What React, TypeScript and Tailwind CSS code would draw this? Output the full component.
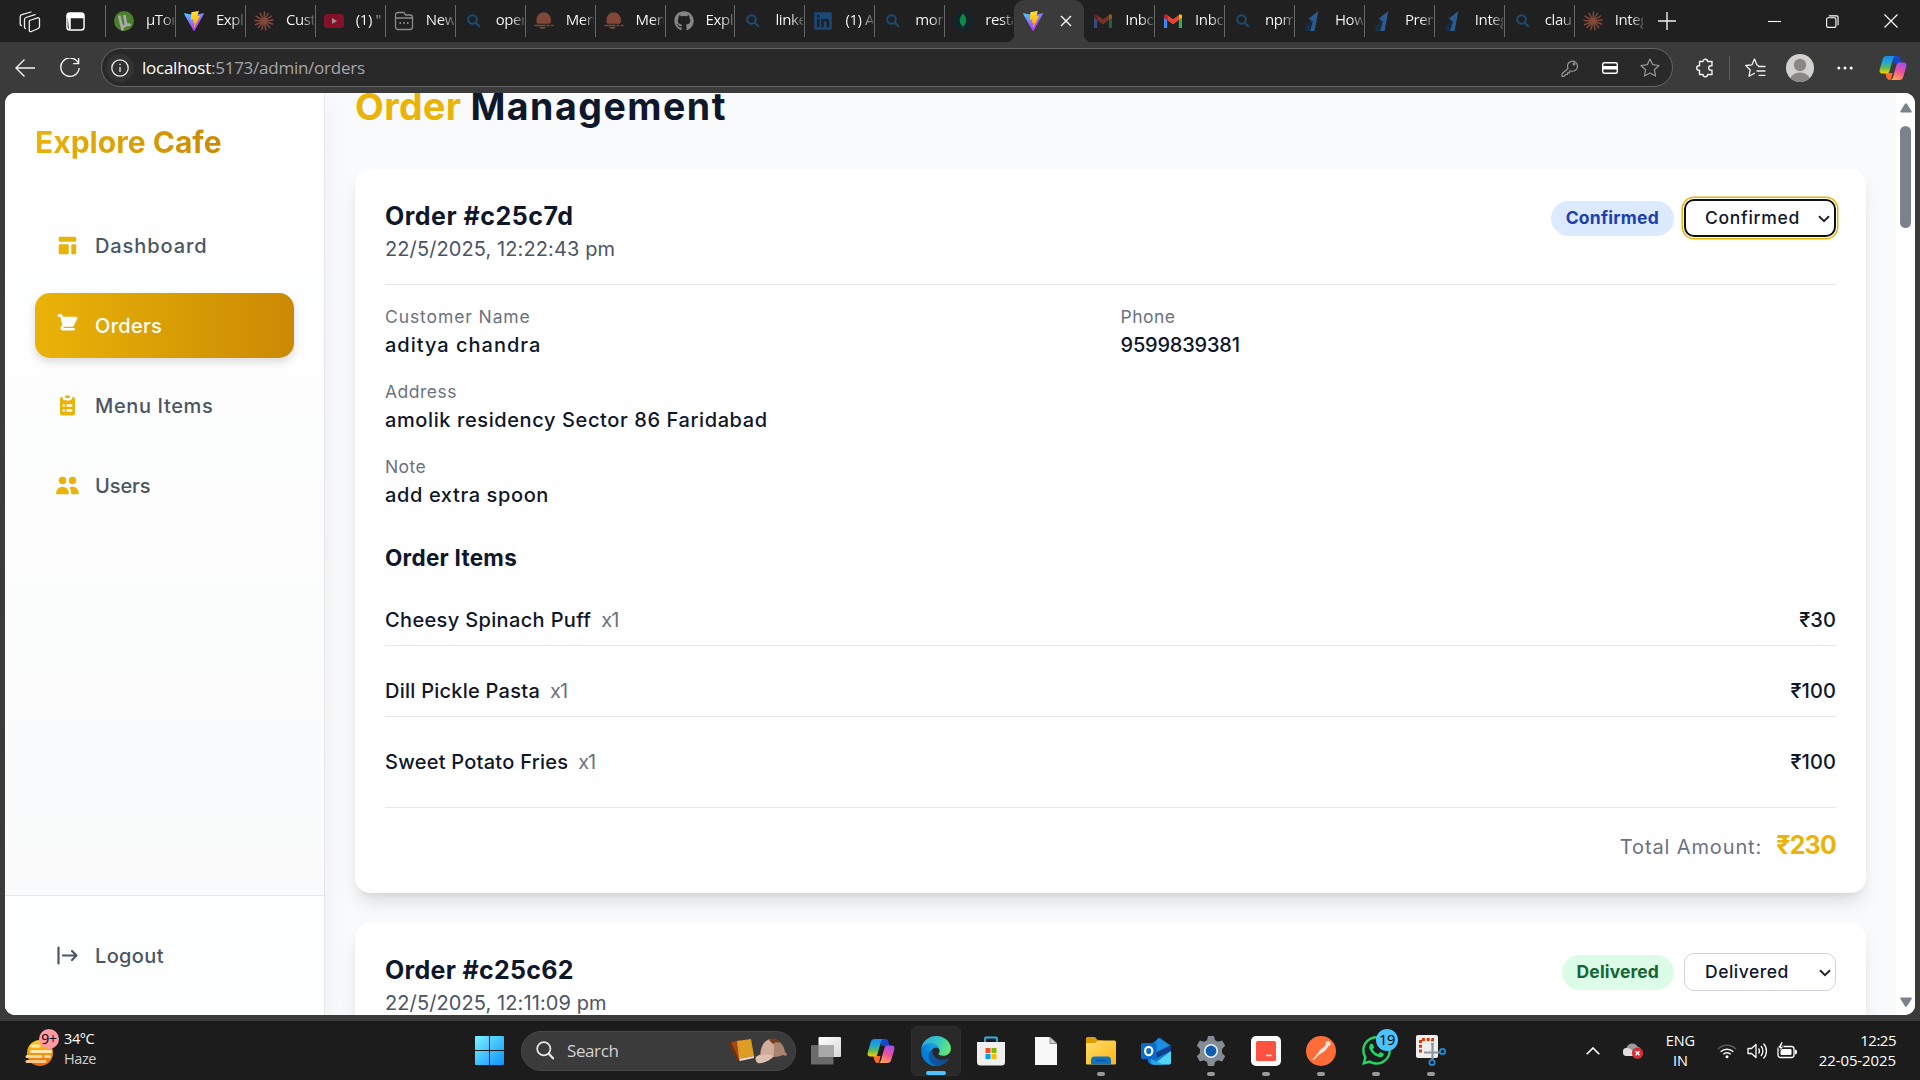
import type { ReactNode } from "react";
import { HiTemplate, HiClipboardList, HiUsers } from "react-icons/hi";
import { FaGithub, FaLinkedin, FaWhatsapp } from "react-icons/fa";

/* ---------- logos ---------- */

function Vite() {
  return (
    <svg viewBox="0 0 256 257" className="size-5">
      <defs>
        <linearGradient id="va" x1="0" x2="0.6" y1="0" y2="0.9"><stop stopColor="#41d1ff" /><stop offset="1" stopColor="#bd34fe" /></linearGradient>
        <linearGradient id="vb" x1="0.4" x2="0.5" y1="0" y2="0.9"><stop stopColor="#ffea83" /><stop offset=".1" stopColor="#ffdd35" /><stop offset="1" stopColor="#ffa800" /></linearGradient>
      </defs>
      <path fill="url(#va)" d="M255.153 37.938L134.897 252.976c-2.483 4.44-8.862 4.466-11.382.048L.875 37.958c-2.746-4.814 1.371-10.646 6.827-9.67l120.385 21.517a6.537 6.537 0 0 0 2.322-.004l117.867-21.483c5.438-.991 9.574 4.796 6.877 9.62Z" />
      <path fill="url(#vb)" d="M185.432.063L96.44 17.501a3.268 3.268 0 0 0-2.634 3.014l-5.474 92.456a3.268 3.268 0 0 0 3.997 3.378l24.777-5.718c2.318-.535 4.413 1.507 3.936 3.838l-7.361 36.047c-.495 2.426 1.782 4.5 4.151 3.78l15.304-4.649c2.372-.72 4.652 1.36 4.15 3.788l-11.698 56.621c-.732 3.542 3.979 5.473 5.943 2.437l1.313-2.028l72.516-144.72c1.215-2.423-.88-5.186-3.54-4.672l-25.505 4.922c-2.396.462-4.435-1.77-3.759-4.114l16.646-57.705c.677-2.35-1.37-4.583-3.769-4.113Z" />
    </svg>
  );
}

function Torrent() {
  return (
    <svg viewBox="0 0 20 20" className="size-5">
      <circle cx="10" cy="10" r="10" fill="#4a7f2b" />
      <path d="M5.2 4.500l2.200 9.400c.3 1.200 1 1.600 2 1.500 1.500-.1 2.800-1.200 2.500-2.900L10.300 4M12 12.500c.5 1.400 2.500 1.800 4.500.8M7.500 14l1.200 5.500" fill="none" stroke="#a9a9a9" strokeWidth="2.800" />
    </svg>
  );
}

function Claude() {
  return (
    <svg viewBox="0 0 20 20" className="size-5" stroke="#82493a" strokeWidth="1.500" strokeLinecap="round">
      <path d="M10 10L10.500 1M10 10L14.200 2.500M10 10L17.500 5M10 10L19 9M10 10L18.500 13M10 10L15.800 16.500M10 10L12 18.800M10 10L7.800 18.500M10 10L4.200 16.500M10 10L1.500 13.800M10 10L1 9.500M10 10L2 5.200M10 10L6 2.200" />
    </svg>
  );
}

function Youtube() {
  return (
    <svg viewBox="0 0 20 20" className="size-5">
      <rect y="3" width="20" height="14" rx="3.500" fill="#831228" />
      <path d="M8 7l5 3-5 3z" fill="#a08b90" />
    </svg>
  );
}

function NewPage() {
  return (
    <svg viewBox="0 0 20 20" className="size-5" fill="none" stroke="#8a8a8a" strokeWidth="1.300">
      <path d="M4 1.500h6l1.500 2.500H16a2.500 2.500 0 0 1 2.500 2.500V16a2.500 2.500 0 0 1-2.500 2.500H4A2.500 2.500 0 0 1 1.500 16V4A2.500 2.500 0 0 1 4 1.500zM1.500 7h17" />
      <path d="M5.500 12h1.500M9.200 12h1.500M13 12h1.500" strokeWidth="1.800" />
    </svg>
  );
}

function Lens() {
  return (
    <svg viewBox="0 0 20 20" className="size-5" fill="none" stroke="#1c4a72" strokeWidth="2">
      <circle cx="8.500" cy="8.500" r="4.300" />
      <path d="M11.800 11.800l4 4" />
    </svg>
  );
}

function Mern() {
  return (
    <svg viewBox="0 0 20 20" className="size-5" fill="#824737">
      <path d="M2.500 11V8.500a7.200 7.200 0 0 1 14.400 0V11c0 1.200-1 1.700-2.200 1.700h-10C3.500 12.700 2.500 12.200 2.500 11zM.5 13.800h11v1.500H.5zM12.500 13.800h3v1.500h-3zM17 13.800h2.500v1.500H17zM5 16h7l-2 1.800H7z" />
    </svg>
  );
}

function Mongo() {
  return (
    <svg viewBox="0 0 20 20" className="size-5">
      <circle cx="10" cy="10" r="10" fill="#13232a" />
      <path d="M10 2.500c2.200 2.500 3.200 4.500 3.200 7s-1.200 4.300-2.800 5.500L10.200 17h-.5l-.2-2C7.800 13.800 6.700 12 6.700 9.500s1-4.500 3.300-7z" fill="#0d8a43" />
    </svg>
  );
}

function Gmail({ dim }: { dim?: boolean }) {
  return (
    <svg viewBox="0 0 20 20" className={dim ? "size-5 opacity-45" : "size-5"}>
      <path fill="#4285f4" d="M1 17h3.200V8.800L1 6.200z" />
      <path fill="#34a853" d="M15.800 17H19V6.200l-3.200 2.600z" />
      <path fill="#fbbc04" d="M15.800 4.200v4.900L19 6.700V5c0-1.700-1.800-2.500-3.200-1.200z" />
      <path fill="#ea4335" d="M4.200 9.100V3.900L10 8.300l5.800-4.400v5.200L10 13.500z" />
      <path fill="#c5221f" d="M1 5v1.700l3.200 2.400V3.800C2.800 2.500 1 3.300 1 5z" />
    </svg>
  );
}

function BlueOne() {
  return (
    <svg viewBox="0 0 20 24" className="h-5 w-[17px]">
      <path fill="#2b5c91" d="M17 0L5 9.500l3.500 1-1 1.800h3L7 24h5.500z" />
      <path fill="#192c47" d="M1 24c0-6 2-9 8-11.500L6.200 24z" />
    </svg>
  );
}

function Copilot({ id }: { id: string }) {
  return (
    <svg viewBox="0 0 28 26" className="h-[26px] w-7">
      <defs>
        <linearGradient id={id + "a"} x1="0" y1="0" x2="0" y2="1"><stop stopColor="#1a8be8" /><stop offset=".35" stopColor="#1ea7d8" /><stop offset=".65" stopColor="#5ab85a" /><stop offset="1" stopColor="#ffd000" /></linearGradient>
        <linearGradient id={id + "b"} x1="0.700" y1="0" x2="0.300" y2="1"><stop stopColor="#a64bf0" /><stop offset=".5" stopColor="#f0529a" /><stop offset="1" stopColor="#ffa64d" /></linearGradient>
      </defs>
      <path fill="#1746c9" d="M12 1h6.500c1.700 0 2.500 1 3 2.800L22.500 8H15z" />
      <path fill="#ff6a2a" d="M6.500 18h7l-1 4.500c-.3 1.500-.9 2.500-2 2.500C8.300 25 7.500 23 6.500 18z" />
      <path fill={"url(#" + id + "a)"} d="M7.500 1H17c-2 0-2.600 1.400-3.200 3.500L10.500 16c-.6 2-1.500 2.600-3.500 2.600H3.500C1 18.600 0 17 .7 14.500L3.800 4C4.500 1.800 5.500 1 7.500 1z" />
      <path fill={"url(#" + id + "b)"} d="M20.500 25H11c2 0 2.600-1.400 3.200-3.500L17.500 10c.6-2 1.500-2.600 3.500-2.600h3.500c2.500 0 3.500 1.600 2.800 4.100L24.200 22c-.7 2.200-1.700 3-3.700 3z" />
    </svg>
  );
}

function Edge() {
  return (
    <svg viewBox="3 2 258 258" className="size-[30px]">
      <defs>
        <linearGradient id="ea" x1="0" x2="1"><stop stopColor="#0c59a4" /><stop offset="1" stopColor="#114a8b" /></linearGradient>
        <linearGradient id="eb" x1="0.800" y1="0.300" x2="0.200" y2="1"><stop stopColor="#1b9de2" /><stop offset=".5" stopColor="#0680d7" /><stop offset="1" stopColor="#0078d4" /></linearGradient>
        <linearGradient id="ec" x1="0" y1="0.300" x2="1" y2="0.600"><stop stopColor="#2fa8e8" /><stop offset=".5" stopColor="#35c7c4" /><stop offset="1" stopColor="#66eb6e" /></linearGradient>
      </defs>
      <path fill="url(#ea)" d="M235.680 195.460a93.730 93.730 0 0 1-10.540 4.710 101.870 101.870 0 0 1-35.900 6.460c-47.320 0-88.540-32.550-88.540-74.320A31.480 31.480 0 0 1 117.130 105c-42.800 1.800-53.800 46.400-53.800 72.530 0 73.880 68.090 81.370 82.760 81.370 7.910 0 19.840-2.300 27-4.560l1.310-.44a128.340 128.340 0 0 0 66.600-52.800 4 4 0 0 0-5.320-5.640Z" />
      <path fill="url(#eb)" d="M105.730 246.760A79.200 79.200 0 0 1 83 225.440a80.720 80.720 0 0 1 34.100-120.440c3.120-1.470 8.450-4.130 15.540-4a32.350 32.350 0 0 1 25.690 13 31.880 31.880 0 0 1 6.360 18.660c0-.21 24.460-79.600-80-79.600-43.900 0-80 41.660-80 78.210a130.150 130.150 0 0 0 12.110 56 128 128 0 0 0 156.380 67.110 75.550 75.550 0 0 1-62.780-8Z" />
      <path fill="url(#ec)" d="M156.330 150.340c-.81 1.050-3.300 2.500-3.300 5.660 0 2.610 1.700 5.120 4.720 7.230 14.380 10 41.490 8.680 41.560 8.680a59.560 59.560 0 0 0 30.270-8.350 61.380 61.380 0 0 0 30.430-52.880c.26-22.410-8-37.310-11.340-43.910C227.460 25.330 181.720 2.500 132 2.500a128 128 0 0 0-128 126.200c.48-36.540 36.800-66.050 80-66.050 3.500 0 23.460.34 42 10.070 16.340 8.580 24.900 18.940 30.850 29.210 6.180 10.670 7.280 24.150 7.280 29.520s-2.740 13.330-7.800 18.890Z" />
    </svg>
  );
}

/* ---------- browser chrome ---------- */

type Tab = { icon: ReactNode; title: string; active?: boolean };

const tabs: Tab[] = [
  { icon: <Torrent />, title: "µTor" },
  { icon: <Vite />, title: "Expl" },
  { icon: <Claude />, title: "Cust" },
  { icon: <Youtube />, title: "(1) \"" },
  { icon: <NewPage />, title: "New" },
  { icon: <Lens />, title: "oper" },
  { icon: <Mern />, title: "Mern" },
  { icon: <Mern />, title: "Mern" },
  { icon: <FaGithub className="size-5 text-[#858585]" />, title: "Expl" },
  { icon: <Lens />, title: "linke" },
  { icon: <FaLinkedin className="size-5 text-[#1c4879]" />, title: "(1) A" },
  { icon: <Lens />, title: "mon" },
  { icon: <Mongo />, title: "resta" },
  { icon: <Vite />, title: "", active: true },
  { icon: <Gmail dim />, title: "Inbo" },
  { icon: <Gmail />, title: "Inbo" },
  { icon: <Lens />, title: "npm" },
  { icon: <BlueOne />, title: "How" },
  { icon: <BlueOne />, title: "Prere" },
  { icon: <BlueOne />, title: "Integ" },
  { icon: <Lens />, title: "clau" },
  { icon: <Claude />, title: "Integ" },
];

function TabStrip() {
  return (
    <div className="flex h-[42px] bg-[#202020] text-white">
      <div className="flex w-[105px] shrink-0 items-center">
        <svg viewBox="0 0 22 22" className="mt-px ml-[19px] size-[22px]" fill="none" stroke="#eee" strokeWidth="1.300" strokeLinejoin="round" strokeLinecap="round">
          <path d="M10.500 9.500l8-2.700c1.200-.3 2 .3 2 1.500v7.200c0 1-.4 1.600-1.300 2l-6.700 3c-1.200.5-2.200 0-2.200-1.300v-8c0-.9.200-1.400.2-1.700zM6.500 17.500c-.7-.2-1-.7-1-1.500V8.500c0-1 .5-1.700 1.500-2L16 3.700M2.300 14.500c-.8-.2-1.100-.7-1.100-1.500V5.700c0-1 .5-1.700 1.500-2L12 1" />
        </svg>
        <svg viewBox="0 0 20 20" className="ml-[25px] size-[19px]" fill="none" stroke="#fff" strokeWidth="1.500">
          <rect x="1" y="1" width="18" height="18" rx="3" />
          <path d="M1 4a3 3 0 0 1 3-3h12a3 3 0 0 1 3 3v2.500H1zM2 6.500h3V18H3z" fill="#fff" stroke="none" />
        </svg>
      </div>
      {tabs.map((t, i) =>
        t.active ? (
          <div key={i} className="relative flex w-[69.950px] shrink-0 items-center rounded-t-[10px] bg-[#3b3b3b] pl-[9px]">
            <span className="absolute bottom-0 -left-2 size-2 bg-[radial-gradient(circle_at_0_0,transparent_8px,#3b3b3b_8.500px)]" />
            <span className="absolute -right-2 bottom-0 size-2 bg-[radial-gradient(circle_at_100%_0,transparent_8px,#3b3b3b_8.500px)]" />
            {t.icon}
            <svg viewBox="0 0 12 12" className="ml-[17px] size-3" stroke="#fff" strokeWidth="1.300"><path d="M1 1l10 10M11 1L1 11" /></svg>
          </div>
        ) : (
          <div key={i} className="flex w-[69.950px] shrink-0 items-center">
            <span className={i === 14 ? "h-8 w-px" : "h-8 w-px bg-[#676767]"} />
            <span className="ml-[8px] flex w-5 shrink-0 justify-center">{t.icon}</span>
            <span className="-mt-[3px] ml-[12px] w-7 overflow-hidden bg-linear-to-r from-white from-55% to-[#555] bg-clip-text font-['Open_Sans',sans-serif] text-[15px] tracking-[-0.4px] whitespace-nowrap text-transparent">
              {t.title}
            </span>
          </div>
        ),
      )}
      <div className="flex w-[45px] items-center border-l border-[#676767]/0">
        <svg viewBox="0 0 18 18" className="ml-[13px] size-[18px]" stroke="#eee" strokeWidth="1.400"><path d="M9 0v18M0 9h18" /></svg>
      </div>
      <div className="ml-auto flex items-center">
        <svg viewBox="0 0 14 14" className="size-[13px]" stroke="#fff" strokeWidth="1.200"><path d="M0 7h14" /></svg>
        <svg viewBox="0 0 14 14" className="ml-[45px] size-[13px]" fill="none" stroke="#fff" strokeWidth="1.200">
          <rect x=".7" y="3" width="10" height="10.300" rx="1.500" /><path d="M3 1h8.500a1.500 1.500 0 0 1 1.500 1.500V11" />
        </svg>
        <svg viewBox="0 0 14 14" className="mr-[22px] ml-[45px] size-[14px]" stroke="#fff" strokeWidth="1.200"><path d="M.5.5l13 13M13.500.5l-13 13" /></svg>
      </div>
    </div>
  );
}

function Toolbar() {
  return (
    <div className="flex h-[51px] items-center bg-[#3b3b3b]">
      <svg viewBox="0 0 20 20" className="ml-[15px] size-5" fill="none" stroke="#f2f2f2" strokeWidth="1.400"><path d="M20 10H1M9.500 1.500L1 10l8.500 8.500" /></svg>
      <svg viewBox="0 0 20 20" className="ml-[25px] size-5" fill="none" stroke="#f2f2f2" strokeWidth="1.400"><path d="M18 4.500A9.200 9.200 0 1 0 19.200 10M18.600 0v5.600h-5.500" /></svg>
      <div className="ml-[21px] flex h-[39px] w-[1572px] items-center rounded-full border border-[#666] bg-[#292929] pl-[4px]">
        <span className="flex size-7 items-center justify-center rounded-full bg-[#333]">
          <svg viewBox="0 0 18 18" className="size-[18px]" fill="none" stroke="#eee" strokeWidth="1.300"><circle cx="9" cy="9" r="8.200" /><path d="M9 8v5M9 4.800v1.500" /></svg>
        </span>
        <span className="ml-[8px] font-['Open_Sans',sans-serif] text-[17px] tracking-[-0.250px] text-[#a6a6a6]">
          <span className="text-white">localhost</span>:5173/admin/orders
        </span>
        <svg viewBox="0 0 18 18" className="ml-auto size-[18px]" fill="none" stroke="#999" strokeWidth="1.200" strokeLinejoin="round">
          <path d="M7 9.500A5 5 0 1 1 10 12H8.500v1.800H6.500v1.700H4.700L3 17.300H1v-2.500z" /><circle cx="13" cy="5" r=".8" />
        </svg>
        <svg viewBox="0 0 16 12" className="ml-[23px] h-3 w-4"><rect x=".7" y=".7" width="14.600" height="10.600" rx="1.500" fill="none" stroke="#fff" strokeWidth="1.400" /><path d="M1 4h14v3.500H1z" fill="#fff" /></svg>
        <svg viewBox="0 0 20 20" className="mr-[12px] ml-[22px] size-5" fill="none" stroke="#999" strokeWidth="1.200" strokeLinejoin="round"><path d="M10 1l2.700 5.700 6.300.8-4.600 4.300 1.200 6.200L10 15l-5.600 3 1.200-6.200L1 7.500l6.300-.8z" /></svg>
      </div>
      <svg viewBox="0 0 20 20" className="ml-[22px] size-5" fill="none" stroke="#f2f2f2" strokeWidth="1.400" strokeLinejoin="round">
        <path d="M4.500 3.500H8a2.300 2.300 0 0 1 4.600 0h4.400v4.200h-1a2.300 2.300 0 0 0 0 4.600h1v4.200h-4.400a2.300 2.300 0 0 1-4.600 0H4.500v-4.200H4a2.300 2.300 0 0 1 0-4.600h.5z" />
      </svg>
      <span className="ml-[14px] h-6 w-px bg-[#5c5c5c]" />
      <svg viewBox="0 0 21 20" className="ml-[15px] h-5 w-[21px]" fill="none" stroke="#f2f2f2" strokeWidth="1.300" strokeLinejoin="round" strokeLinecap="round">
        <path d="M13 7.300l-1-.200L9.500 1 7 6.800l-6.200.7L5.200 12 4 18.200l5.500-3M13.500 8.500H20M12 13h8M14 17.300h6" />
      </svg>
      <svg viewBox="0 0 28 28" className="ml-[20px] size-7">
        <clipPath id="av"><circle cx="14" cy="14" r="14" /></clipPath>
        <circle cx="14" cy="14" r="14" fill="#d3d1ce" />
        <g clipPath="url(#av)" fill="#8b8784"><circle cx="14" cy="11" r="6.200" /><ellipse cx="14" cy="25" rx="9.500" ry="6.500" /></g>
      </svg>
      <svg viewBox="0 0 16 4" className="ml-[23px] h-1 w-4" fill="#fff"><circle cx="1.800" cy="2" r="1.500" /><circle cx="8" cy="2" r="1.500" /><circle cx="14.200" cy="2" r="1.500" /></svg>
      <span className="ml-[26px]"><Copilot id="ct" /></span>
    </div>
  );
}

/* ---------- page ---------- */

function NavItem({ icon, label, active }: { icon: ReactNode; label: string; active?: boolean }) {
  return (
    <div
      className={
        active
          ? "flex h-[65px] items-center rounded-[15px] bg-linear-to-r from-[#eab308] to-[#ca8a04] pl-5 font-[550] text-white shadow-[0_4px_8px_rgba(0,0,0,0.14)]"
          : "flex h-[65px] items-center pl-5 font-[450] text-[#4b5563]"
      }
    >
      <span className={active ? "flex w-[25px] justify-center text-white" : "flex w-[25px] justify-center text-[#eab308]"}>{icon}</span>
      <span className="ml-[15px] text-[20px]">{label}</span>
    </div>
  );
}

function Sidebar() {
  return (
    <div className="z-10 flex w-[320px] shrink-0 flex-col border-r border-[#e5e7eb] bg-linear-to-b from-white to-[#f9fafb] shadow-[0_10px_25px_rgba(0,0,0,0.06)]">
      <div className="mt-[29px] ml-[30px] self-start bg-linear-to-r from-[#eab308] to-[#ca8a04] bg-clip-text text-[30px] leading-[40px] font-bold tracking-[0.020px] text-transparent">
        Explore Cafe
      </div>
      <div className="mt-[51px] flex flex-col gap-[15px] px-[30px]">
        <div className="tracking-[0.900px]"><NavItem icon={<HiTemplate className="size-[25px]" />} label="Dashboard" /></div>
        <div className="tracking-[0.300px]">
          <NavItem
            active
            label="Orders"
            icon={
              <svg viewBox="0 0 20 20" className="size-[25px]" fill="currentColor">
                <path d="M3 1a1 1 0 000 2h1.220l.305 1.222a.997.997 0 00.010.042l1.358 5.430-.893.892C3.740 11.846 4.632 14 6.414 14H15a1 1 0 000-2H6.414l1-1H14a1 1 0 00.894-.553l3-6A1 1 0 0017 3H6.280l-.310-1.243A1 1 0 005 1H3z" />
              </svg>
            }
          />
        </div>
        <div className="tracking-[0.630px]"><NavItem icon={<HiClipboardList className="size-[25px]" />} label="Menu Items" /></div>
        <div className="tracking-[-0.100px]"><NavItem icon={<HiUsers className="size-[25px]" />} label="Users" /></div>
      </div>
      <div className="mt-auto flex h-[120px] items-center border-t border-[#e5e7eb] bg-[#fdfefe] pl-[50px] font-[450] tracking-[0.350px] text-[#4b5563]">
        <svg viewBox="0 0 25 25" className="size-[25px]" fill="none" stroke="currentColor" strokeWidth="2.200" strokeLinecap="round" strokeLinejoin="round">
          <path d="M3.500 4.500v16M8 12.500h13.500M17 8l4.500 4.500L17 17" />
        </svg>
        <span className="ml-[15px] text-[20px]">Logout</span>
      </div>
    </div>
  );
}

function Chevron() {
  return (
    <svg viewBox="0 0 12 8" className="mt-[2px] mr-[4px] ml-auto h-2 w-3" fill="none" stroke="#1f2430" strokeWidth="2"><path d="M1 1.200l5 5 5-5" /></svg>
  );
}

function Field({ label, value, labelClass, valueClass }: { label: string; value: string; labelClass: string; valueClass: string }) {
  return (
    <div>
      <div className={"-mt-px mb-px text-[17.5px] leading-[25px] text-[#6b7280] " + labelClass}>{label}</div>
      <div className={"text-[20px] leading-[30px] font-[470] " + valueClass}>{value}</div>
    </div>
  );
}

function Item({ name, nameClass, price, line }: { name: string; nameClass: string; price: string; line?: boolean }) {
  return (
    <div className={line ? "flex items-center border-b border-[#e5e7eb] py-[10px] text-[20px] leading-[30px] font-[470]" : "flex items-center py-[10px] text-[20px] leading-[30px] font-[470]"}>
      <span className={nameClass}>{name}</span>
      <span className="ml-[10px] font-normal tracking-[-1px] text-[#6b7280]">x1</span>
      <span className="ml-auto tracking-[0.100px]">{price}</span>
    </div>
  );
}

function Orders() {
  return (
    <div className="min-w-0 flex-1 overflow-hidden bg-[#f9fafc] px-[30px] text-[#0f172a]">
      <h1 className="-mt-[9px] text-[37.5px] leading-[45px] font-bold">
        <span className="tracking-[0.400px] text-[#eab308]">Order</span> <span className="tracking-[1.500px]">Management</span>
      </h1>
      <div className="mt-[40px] w-[1511px] rounded-[15px] bg-white p-[30px] shadow-[0_12px_19px_-4px_rgba(0,0,0,0.12),0_5px_8px_-5px_rgba(0,0,0,0.1)]">
        <div className="flex items-start border-b border-[#e5e7eb] pb-[20px]">
          <div>
            <h2 className="text-[25px] leading-[35px] font-bold tracking-[0.500px]">Order #c25c7d</h2>
            <div className="text-[20px] leading-[30px] tracking-[0.100px] text-[#4b5563]">22/5/2025, 12:22:43 pm</div>
          </div>
          <div className="ml-auto flex items-center gap-[10px] text-[17.5px] leading-[25px]">
            <span className="rounded-full bg-[#dbeafe] px-[15px] pt-[4px] pb-[6px] font-bold tracking-[0.250px] text-[#1e40af]">Confirmed</span>
            <div className="flex h-[38px] w-[152px] items-center rounded-[10px] border-2 border-[#101010] bg-white pb-px pl-[19px] font-[450] tracking-[0.700px] shadow-[0_0_0_1px_#fff,0_0_0_2.5px_#eab308]">
              Confirmed
              <Chevron />
            </div>
          </div>
        </div>
        <div className="mt-[20px] grid grid-cols-2 gap-x-[20px] gap-y-[20px]">
          <Field label="Customer Name" value="aditya chandra" labelClass="tracking-[0.900px]" valueClass="tracking-[1.000px]" />
          <Field label="Phone" value="9599839381" labelClass="tracking-[0.500px]" valueClass="tracking-[-0.200px]" />
          <div className="col-span-2"><Field label="Address" value="amolik residency Sector 86 Faridabad" labelClass="tracking-[0.500px]" valueClass="tracking-[0.600px]" /></div>
          <div className="col-span-2"><Field label="Note" value="add extra spoon" labelClass="tracking-[0.400px]" valueClass="tracking-[0.620px]" /></div>
        </div>
        <h3 className="mt-[30px] mb-[20px] text-[22.5px] leading-[35px] font-bold tracking-[0.250px]">Order Items</h3>
        <div className="flex flex-col gap-[20px]">
          <Item name="Cheesy Spinach Puff" nameClass="tracking-[0.350px]" price="₹30" line />
          <Item name="Dill Pickle Pasta" nameClass="tracking-[0.250px]" price="₹100" line />
          <Item name="Sweet Potato Fries" nameClass="tracking-[0.250px]" price="₹100" />
        </div>
        <div className="mt-[20px] flex items-baseline justify-end border-t border-[#e5e7eb] pt-[20px]">
          <span className="text-[20px] leading-[30px] tracking-[0.880px] text-[#6b7280]">Total Amount:</span>
          <span className="ml-[14px] text-[25px] leading-[35px] font-bold tracking-[-0.800px] text-[#eab308]">₹230</span>
        </div>
      </div>
      <div className="mt-[30px] h-[400px] w-[1511px] rounded-[15px] bg-white p-[30px] shadow-[0_12px_19px_-4px_rgba(0,0,0,0.12),0_5px_8px_-5px_rgba(0,0,0,0.1)]">
        <div className="flex items-start">
          <div>
            <h2 className="text-[25px] leading-[35px] font-bold tracking-[0.300px]">Order #c25c62</h2>
            <div className="text-[20px] leading-[30px] tracking-[0.100px] text-[#4b5563]">22/5/2025, 12:11:09 pm</div>
          </div>
          <div className="ml-auto flex items-center gap-[10px] text-[17.5px] leading-[25px]">
            <span className="rounded-full bg-[#dcfce7] px-[15px] pt-[4px] pb-[6px] font-bold tracking-[0.120px] text-[#166534]">Delivered</span>
            <div className="flex h-[38px] w-[152px] items-center rounded-[10px] border border-[#d1d5db] bg-white pb-px pl-[20px] font-[450] tracking-[0.500px]">
              Delivered
              <Chevron />
            </div>
          </div>
        </div>
      </div>
    </div>
  );
}

function Scrollbar() {
  return (
    <div className="flex w-[19px] shrink-0 flex-col items-center bg-white pt-[10px] pb-[8px]">
      <svg viewBox="0 0 12 10" className="h-[10px] w-3" fill="#7b828b"><path d="M5 .8Q6-.4 7 .8l4.700 7.500Q12 9.600 11 9.600H1Q0 9.600.3 8.300z" /></svg>
      <div className="mt-[13px] h-[102px] w-[11px] rounded-full bg-[#7b828b]" />
      <svg viewBox="0 0 12 10" className="mt-auto h-[10px] w-3 rotate-180" fill="#7b828b"><path d="M5 .8Q6-.4 7 .8l4.700 7.500Q12 9.600 11 9.600H1Q0 9.600.3 8.300z" /></svg>
    </div>
  );
}

/* ---------- taskbar ---------- */

function Slot({ children, dot, active }: { children: ReactNode; dot?: boolean; active?: boolean }) {
  return (
    <div className="flex w-[55px] shrink-0 justify-center">
      <div className={active ? "relative flex h-[50px] w-[50px] items-center justify-center rounded-md border border-[#303030] bg-[#292929]" : "relative flex h-[50px] w-[50px] items-center justify-center"}>
        {children}
        {active && <span className="absolute bottom-0 h-1 w-5 rounded-full bg-[#4cc2ff]" />}
        {dot && <span className="absolute bottom-0 h-1 w-2 rounded-full bg-[#9a9a9a]" />}
      </div>
    </div>
  );
}

function Taskbar() {
  return (
    <div className="flex h-[59px] items-center bg-[#1c1c1c] font-['Open_Sans',sans-serif] text-white">
      <div className="flex w-[475px] shrink-0 items-center">
        <div className="relative ml-[24px] h-9 w-9">
          <svg viewBox="0 0 36 36" className="size-9">
            <defs><linearGradient id="sun" x1="0" y1="0" x2="0" y2="1"><stop stopColor="#ffcf14" /><stop offset="1" stopColor="#e8650a" /></linearGradient></defs>
            <circle cx="16" cy="20" r="13" fill="url(#sun)" />
            <g stroke="#ffe9ae" strokeWidth="3" strokeLinecap="round"><path d="M8 13h7M7.500 18.500h19" /><path d="M3 23.500h14M21.500 23.500h4" stroke="#f4d9a0" /><path d="M3 28.500h18" stroke="#f6c98b" /></g>
          </svg>
          <span className="absolute top-[-4px] left-[15px] flex size-5 items-center justify-center rounded-full bg-[#ff99a4] text-[14px] tracking-[-0.3px] text-black">9+</span>
        </div>
        <div className="-mt-[3px] ml-[4px] text-[14.500px] leading-[20px] tracking-[-0.400px]">
          <div>34°C</div>
          <div className="text-[#cfcfcf]">Haze</div>
        </div>
      </div>
      <svg viewBox="0 0 29 29" className="size-[29px] shrink-0">
        <defs><linearGradient id="win" x1="0" y1="0" x2="1" y2="1"><stop stopColor="#7af3ff" /><stop offset="1" stopColor="#0a92ff" /></linearGradient></defs>
        <path fill="url(#win)" d="M1 0h13v14H0V1a1 1 0 0 1 1-1zM15 0h13a1 1 0 0 1 1 1v13H15zM0 15h14v14H1a1 1 0 0 1-1-1zM15 15h14v13a1 1 0 0 1-1 1H15z" />
      </svg>
      <div className="ml-[17px] flex h-10 w-[275px] shrink-0 items-center rounded-full border border-[#484848] bg-[#3b3b3b] pl-[14px]">
        <svg viewBox="0 0 18 19" className="h-[19px] w-[18px]" fill="none" stroke="#e4e4e4" strokeLinecap="round"><circle cx="7.800" cy="7.800" r="6.600" strokeWidth="1.800" /><path d="M12.800 12.800l4.200 4.500" strokeWidth="2.400" /></svg>
        <span className="ml-[13px] text-[17px] tracking-[-0.400px] text-[#d2d2d2]">Search</span>
        <svg viewBox="0 0 60 26" className="mr-[7px] ml-auto h-[26px] w-[60px]">
          <path d="M1 5l11-3 6 18-9 3z" fill="#a1481c" />
          <path d="M1 5l2-1 8 18-2 1z" fill="#6e2b0e" />
          <path d="M9 3l14-2 3 17-15 3z" fill="#dd9d25" />
          <path d="M11 21l15-3v2l-14 3z" fill="#f0d9d4" />
          <path d="M32 16C33 5 40 1 45 1c6 0 11 6 12 13l2 2c0 2-2 2-4 1-3 1-6 2-9 2z" fill="#a98370" />
          <path d="M33 16C33 6 38 1 44 1c2 5 3 12 1 18-6-2-10-1-13 2-2 2-5 0-4-2 1-1 3-2 5-3z" fill="#cfac9b" />
          <path d="M28 19c5-3 12-3 18-1-4 5-12 8-16 7-2-1-3-4-2-6z" fill="#dcc0b0" />
          <path d="M41 2c4-3 10-1 11 3l-4-1-3 2z" fill="#7d3b17" />
        </svg>
      </div>
      <div className="ml-[2.500px] flex shrink-0">
        <Slot>
          <svg viewBox="0 0 30 28" className="h-7 w-[30px]">
            <defs><linearGradient id="tv" x1="0" y1="0" x2="1" y2="1"><stop stopColor="#fff" /><stop offset="1" stopColor="#d8d8d8" /></linearGradient></defs>
            <rect x="7.500" width="22.500" height="20" rx="1" fill="url(#tv)" />
            <rect y="8" width="22.500" height="19.500" rx="1" fill="#6a6a6a" />
            <path d="M7.500 8h15v12h-15z" fill="#a9a9a9" />
          </svg>
        </Slot>
        <Slot><Copilot id="cb" /></Slot>
        <Slot active><Edge /></Slot>
        <Slot>
          <svg viewBox="0 0 30 30" className="size-[30px]">
            <path d="M9 6V2.500a1 1 0 0 1 1-1h10a1 1 0 0 1 1 1V6" fill="none" stroke="#2fb4ea" strokeWidth="1.800" />
            <path d="M1 6h28v20a3.500 3.500 0 0 1-3.500 3.500h-21A3.500 3.500 0 0 1 1 26z" fill="#efefef" />
            <path fill="#f25022" d="M9.500 12h5v5h-5z" /><path fill="#7fba00" d="M15.500 12h5v5h-5z" /><path fill="#00a4ef" d="M9.500 18h5v5h-5z" /><path fill="#ffb900" d="M15.500 18h5v5h-5z" />
          </svg>
        </Slot>
        <Slot>
          <svg viewBox="0 0 22 28" className="h-7 w-[22px]"><path d="M0 0h15l7 6.500V28H0z" fill="#f8f8f8" /><path d="M15 0l7 6.500h-7z" fill="#cfcfcf" stroke="#666" strokeWidth=".7" /></svg>
        </Slot>
        <Slot dot>
          <svg viewBox="0 0 30 28" className="h-7 w-[30px]">
            <defs><linearGradient id="fo" x1="0" y1="0" x2="1" y2="1"><stop stopColor="#ffdc6a" /><stop offset="1" stopColor="#fdb813" /></linearGradient></defs>
            <path d="M0 1.500A1.500 1.500 0 0 1 1.500 0H9l3 3.500h5V12H0z" fill="#dd9c04" />
            <path d="M0 6h9l3-2.500h16.500A1.500 1.500 0 0 1 30 5v21.500a1 1 0 0 1-1 1H1a1 1 0 0 1-1-1z" fill="url(#fo)" />
            <path d="M5 27.500V23a3.500 3.500 0 0 1 3.500-3.500h13A3.500 3.500 0 0 1 25 23v4.500z" fill="#0f73c4" /><path d="M10 23.500h10" stroke="#0a4f96" strokeWidth="1.300" />
          </svg>
        </Slot>
        <Slot>
          <svg viewBox="0 0 30 28" className="h-7 w-[30px]">
            <path d="M7 9L19 .8 30 9v16a2.500 2.500 0 0 1-2.500 2.500H10L7 25z" fill="#0f78d4" />
            <path d="M17 1l13 8v5L12 24V10z" fill="#1d8de0" /><path d="M30 8v6L12 23v-6z" fill="#123f8c" />
            <path d="M30 14v11.500a2 2 0 0 1-2 2H12z" fill="#4fd5f5" /><path d="M10 22l12 5.500H12.500A2.500 2.500 0 0 1 10 25z" fill="#28a8ea" />
            <rect y="6" width="15.500" height="16" rx="1.500" fill="#0a6cc9" />
            <ellipse cx="7.700" cy="14" rx="3.600" ry="4.200" fill="none" stroke="#fff" strokeWidth="2.200" />
          </svg>
        </Slot>
        <Slot dot>
          <svg viewBox="0 0 30 30" className="size-[30px]">
            <path fill="#838b93" d="M12 0h6l1 4.200 3 1.600 4.200-1.300 3 5.200-3.200 3.200v4.200l3.200 3.200-3 5.200-4.200-1.300-3 1.700L18 30h-6l-1-4.100-3-1.700-4.200 1.300-3-5.200L4 17.100v-4.200L.8 9.700l3-5.200L8 5.800l3-1.600z" />
            <circle cx="15" cy="15" r="7" fill="#e8eef4" /><circle cx="15" cy="15" r="5.400" fill="#0f5db0" />
          </svg>
        </Slot>
        <Slot dot>
          <svg viewBox="0 0 30 30" className="size-[30px]"><rect width="30" height="30" rx="5" fill="#fafafa" /><rect x="5" y="5" width="20" height="20" rx="1.500" fill="#ff513f" /><path d="M15 19.500h5.500" stroke="#fff" strokeWidth="1.500" /></svg>
        </Slot>
        <Slot dot>
          <svg viewBox="0 0 30 30" className="size-[30px]">
            <circle cx="15" cy="15" r="15" fill="#ff6c37" />
            <circle cx="22" cy="7.500" r="2.600" fill="#fbe4dc" /><path d="M20.500 9.500L14 15l-3 4.500L19 14l2.500-3.500z" fill="#fbe4dc" stroke="#fbe4dc" strokeWidth="1.200" /><path d="M12.500 18L7 24" stroke="#fbe4dc" strokeWidth="1.500" />
          </svg>
        </Slot>
        <Slot dot>
          <FaWhatsapp className="size-[33px] text-[#25d366]" />
          <span className="absolute top-[3px] left-[25px] flex size-[22px] items-center justify-center rounded-full bg-[#4cc2ff] text-[14.500px] tracking-[-0.4px] text-black">19</span>
        </Slot>
        <Slot dot>
          <svg viewBox="0 0 30 31" className="h-[31px] w-[30px]">
            <rect width="22" height="23" rx="2" fill="#eeeeee" />
            <path d="M4.500 17.500v-13h12v5" fill="none" stroke="#d83b01" strokeWidth="3" strokeDasharray="3 1.800" />
            <path d="M16.500 8v16M8 17.500h16" stroke="#8c97a1" strokeWidth="2.200" />
            <circle cx="26.500" cy="16.500" r="2.600" fill="none" stroke="#1a8fd8" strokeWidth="1.800" /><circle cx="16" cy="27.500" r="2.600" fill="none" stroke="#1a8fd8" strokeWidth="1.800" />
          </svg>
        </Slot>
      </div>
      <div className="ml-auto flex shrink-0 items-center pr-[24px]">
        <svg viewBox="0 0 14 8" className="h-2 w-[14px]" fill="none" stroke="#fff" strokeWidth="1.600"><path d="M.7 7.300L7 1l6.300 6.300" /></svg>
        <svg viewBox="0 0 20 17" className="ml-[23px] h-[17px] w-5">
          <path d="M4 14a4 4 0 0 1-.5-8A6 6 0 0 1 14.500 4.500 5 5 0 0 1 17 13z" fill="#9b9b9b" /><path d="M4 14a4 4 0 0 1 0-8c3 0 4.500 1.500 6 4l3 4z" fill="#e0e0e0" />
          <circle cx="14.500" cy="11.200" r="5.600" fill="#d92c36" /><path d="M12.500 9.200l4 4M16.500 9.200l-4 4" stroke="#fff" strokeWidth="1.400" />
        </svg>
        <div className="ml-[23px] text-center text-[14.500px] leading-[20px] tracking-[-0.100px]"><div>ENG</div><div>IN</div></div>
        <svg viewBox="0 0 20 16" className="ml-[22px] h-4 w-5" fill="none" stroke="#fff" strokeWidth="1.500">
          <path d="M1 6.200a12.500 12.500 0 0 1 18 0" stroke="#5a5a5a" /><path d="M3.700 8.800a9 9 0 0 1 12.600 0M6.300 11.300a5.300 5.300 0 0 1 7.400 0" /><circle cx="10" cy="13.800" r="1.500" fill="#fff" stroke="none" />
        </svg>
        <svg viewBox="0 0 20 18" className="ml-[10px] h-[18px] w-5" fill="none" stroke="#fff" strokeWidth="1.300" strokeLinejoin="round">
          <path d="M1 6.500h3.500L9 2.500v13l-4.500-4H1zM11.500 6.500a4 4 0 0 1 0 5M14 4a7.500 7.500 0 0 1 0 10M16.500 1.500a11 11 0 0 1 0 15" />
        </svg>
        <svg viewBox="0 0 20 17" className="ml-[10px] h-[17px] w-5">
          <rect x="1" y="4.500" width="16" height="11" rx="2.500" fill="none" stroke="#fff" strokeWidth="1.300" /><rect x="3.500" y="7" width="11" height="6" rx="1" fill="#fff" /><path d="M18 7.500c1.200 0 2 .8 2 2.500s-.8 2.500-2 2.500z" fill="#fff" />
          <path d="M4.500-.5L.8 6h2.400L2 10.500 6.500 4.500H4.300L6 .5z" fill="#fff" stroke="#1c1c1c" strokeWidth=".7" />
        </svg>
        <div className="-mt-[2px] ml-[20px] w-[79px] text-right text-[15px] leading-[20px] tracking-[-0.100px] whitespace-nowrap"><div className="tracking-[-0.500px]">12:25</div><div>22-05-2025</div></div>
      </div>
    </div>
  );
}

export default function App() {
  return (
    <div className="flex h-[1080px] w-[1920px] flex-col overflow-hidden bg-[#3b3b3b] font-['Inter',sans-serif]">
      <TabStrip />
      <Toolbar />
      <div className="mx-[5px] mb-[6px] flex h-[922px] shrink-0 overflow-hidden rounded-[10px] bg-[#f9fafc]">
        <Sidebar />
        <Orders />
        <Scrollbar />
      </div>
      <Taskbar />
    </div>
  );
}
